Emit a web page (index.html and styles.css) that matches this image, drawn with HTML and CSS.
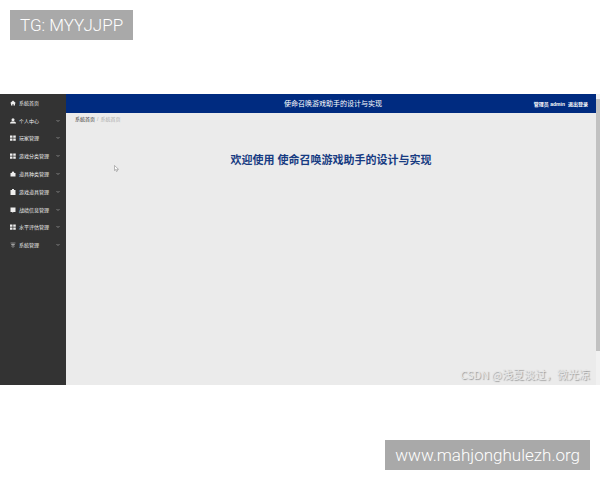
FILE: index.html
```
<!DOCTYPE html>
<html lang="zh-CN">
<head>
    <meta charset="UTF-8">
    <meta name="viewport" content="width=device-width, initial-scale=1.0">
    <title>使命召唤游戏助手的设计与实现</title>
    <link rel="stylesheet" href="styles.css">
</head>
<body>
    <div class="tag tag-top">TG: MYYJJPP</div>

    <div class="app">
        <nav class="sidebar">
            <ul class="menu">
                <li><a href="#"><svg class="icon" viewBox="0 0 12 12"><path d="M6 1 0 6.500h2V11h3V8h2v3h3V6.500h2z"/></svg><span>系统首页</span></a></li>
                <li><a href="#"><svg class="icon" viewBox="0 0 12 12"><circle cx="6" cy="3.500" r="3"/><path d="M0 11c0-3 2-4 6-4s6 1 6 4z"/></svg><span>个人中心</span><svg class="arrow" viewBox="0 0 8 8"><path d="m1 2 3 3 3-3"/></svg></a></li>
                <li><a href="#"><svg class="icon" viewBox="0 0 12 12"><path d="M0 1h5v4.500H0zM6.500 1h5v4.500h-5zM0 7h5v4.500H0zM6.500 7h5v4.500h-5z"/></svg><span>玩家管理</span><svg class="arrow" viewBox="0 0 8 8"><path d="m1 2 3 3 3-3"/></svg></a></li>
                <li><a href="#"><svg class="icon" viewBox="0 0 12 12"><path d="M0 1h5v4.500H0zM6.500 1h5v4.500h-5zM0 7h5v4.500H0zM6.500 7h5v4.500h-5z"/></svg><span>游戏分类管理</span><svg class="arrow" viewBox="0 0 8 8"><path d="m1 2 3 3 3-3"/></svg></a></li>
                <li><a href="#"><svg class="icon" viewBox="0 0 12 12"><path d="M1 4h2.500c0-4 5-4 5 0H11v7H1z"/></svg><span>道具种类管理</span><svg class="arrow" viewBox="0 0 8 8"><path d="m1 2 3 3 3-3"/></svg></a></li>
                <li><a href="#"><svg class="icon" viewBox="0 0 12 12"><path d="M1 2h3V0h4v2h3v10H1z"/></svg><span>游戏道具管理</span><svg class="arrow" viewBox="0 0 8 8"><path d="m1 2 3 3 3-3"/></svg></a></li>
                <li><a href="#"><svg class="icon" viewBox="0 0 12 12"><path d="M1 1h10v9H7l-2 2v-2H1z"/></svg><span>战绩信息管理</span><svg class="arrow" viewBox="0 0 8 8"><path d="m1 2 3 3 3-3"/></svg></a></li>
                <li><a href="#"><svg class="icon" viewBox="0 0 12 12"><path d="M0 1h5v4.500H0zM6.500 1h5v4.500h-5zM0 7h5v4.500H0zM6.500 7h5v4.500h-5z"/></svg><span>水平评估管理</span><svg class="arrow" viewBox="0 0 8 8"><path d="m1 2 3 3 3-3"/></svg></a></li>
                <li><a href="#"><svg class="icon icon-line" viewBox="0 0 12 12"><path d="M1 2h10M2 5h8M3 8l3 3 3-3"/><circle cx="6" cy="6" r="2"/></svg><span>系统管理</span><svg class="arrow" viewBox="0 0 8 8"><path d="m1 2 3 3 3-3"/></svg></a></li>
            </ul>
        </nav>

        <div class="content">
            <header class="topbar">
                <span class="topbar-title">使命召唤游戏助手的设计与实现</span>
                <div class="user">
                    <span>管理员 admin</span>
                    <a href="#">退出登录</a>
                </div>
            </header>
            <main>
                <div class="breadcrumb">
                    <a href="#">系统首页</a>
                    <span class="separator">/</span>
                    <span class="current">系统首页</span>
                </div>
                <h1>欢迎使用 使命召唤游戏助手的设计与实现</h1>
            </main>
        </div>

        <div class="scrollbar"><div class="thumb"></div></div>

        <svg class="cursor" viewBox="0 0 10 14"><path d="M1 1v10l2.500-2 1.500 4 2-1-1.500-3.500H9z"/></svg>
        <div class="watermark">CSDN @浅夏淡过，微光凉</div>
    </div>

    <div class="tag tag-bottom">www.mahjonghulezh.org</div>
</body>
</html>
```
FILE: styles.css
```
* {
    box-sizing: border-box;
}
body {
    margin: 0;
    min-height: 100vh;
    padding: 10px 0;
    display: flex;
    flex-direction: column;
    background-color: #fff;
    font-family: "Liberation Sans", "Noto Sans CJK SC", sans-serif;
}
a {
    color: inherit;
    text-decoration: none;
}
.tag {
    padding: 0 10px;
    background-color: #a9a9a9;
    color: #fff;
    font-family: Roboto, sans-serif;
    font-size: 17px;
    font-weight: 300;
    line-height: 30px;
}
.tag-top {
    align-self: flex-start;
    margin-left: 10px;
}
.tag-bottom {
    align-self: flex-end;
    margin-top: auto;
    margin-right: 10px;
}
.app {
    position: relative;
    display: flex;
    min-height: 291px;
    margin-top: 54px;
    background-color: #ebebeb;
}

/* Sidebar */
.sidebar {
    width: 11%;
    background-color: #333;
    color: #eee;
}
.menu {
    display: grid;
    grid-auto-rows: 1fr;
    height: 160px;
    margin: 0;
    padding: 0;
    list-style-type: none;
}
.menu a {
    display: flex;
    align-items: center;
    height: 100%;
    padding: 0 6px 0 10px;
    font-size: 5px;
    line-height: 8px;
}
.icon {
    width: 6px;
    height: 6px;
    margin-right: 3px;
    fill: #eee;
}
.icon-line {
    fill: none;
    stroke: #ccc;
    stroke-width: 1;
}
.arrow {
    width: 4px;
    height: 4px;
    margin-left: auto;
    fill: none;
    stroke: #ccc;
    stroke-width: 1;
}

/* Top bar and page */
.content {
    flex: 1;
}
.topbar {
    display: grid;
    grid-template-columns: 1fr auto 1fr;
    align-items: center;
    height: 19px;
    padding: 0 8px 0 12px;
    background-color: #002b80;
    color: #fff;
}
.topbar-title {
    grid-column: 2;
    font-size: 7px;
    line-height: 12px;
}
.user {
    display: flex;
    justify-content: flex-end;
    gap: 3px;
    font-size: 5px;
    font-weight: bold;
    line-height: 8px;
}
.breadcrumb {
    display: flex;
    gap: 2px;
    padding: 2px 9px;
    color: #333;
    font-size: 5px;
    line-height: 8px;
}
.separator,
.current {
    color: #aaa;
}
h1 {
    margin: 25px 0 0;
    color: #173b82;
    font-size: 11px;
    line-height: 20px;
    text-align: center;
}
.scrollbar {
    width: 4px;
    padding-top: 5px;
    background-color: #f1f1f1;
}
.thumb {
    height: 88%;
    background-color: #c1c1c1;
}
.cursor {
    position: absolute;
    top: 71px;
    left: 114px;
    width: 5px;
    height: 7px;
    fill: #fff;
    stroke: #777;
}
.watermark {
    position: absolute;
    right: 10px;
    bottom: 3px;
    color: #e8e8e8;
    font-family: "Noto Sans CJK SC", sans-serif;
    font-size: 11px;
    line-height: 16px;
    text-shadow: 1px 1px 1px #999;
}
```
